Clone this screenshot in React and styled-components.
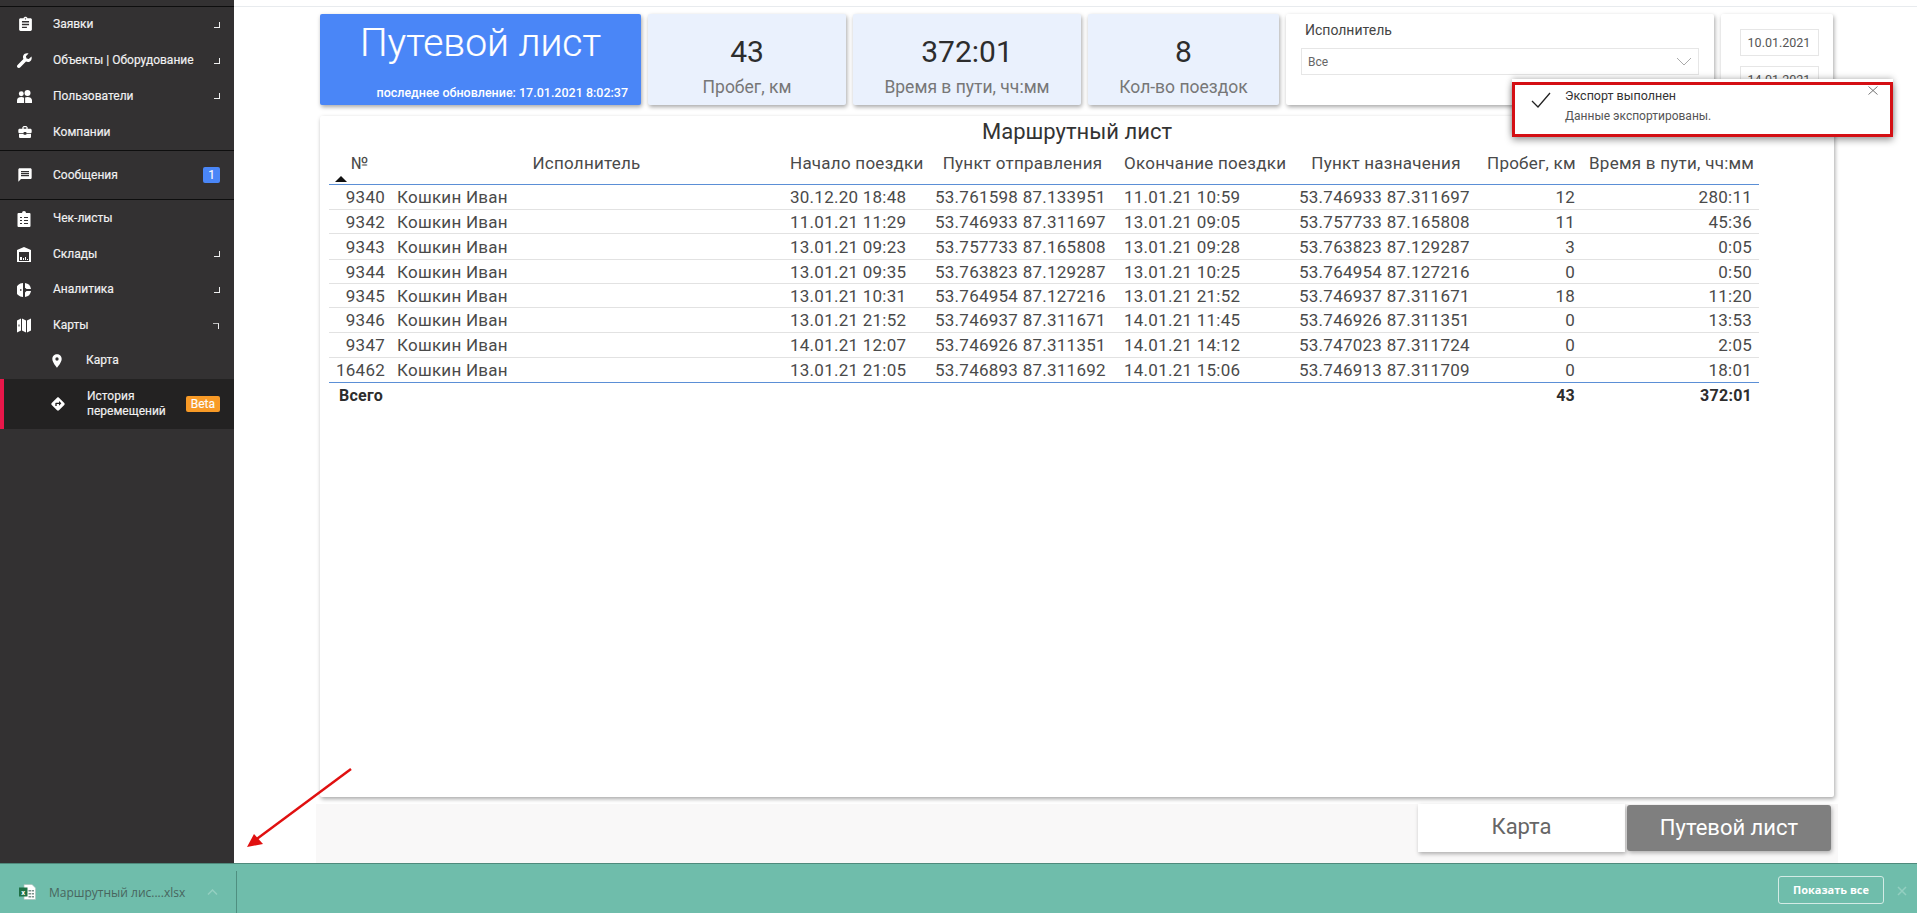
import React from 'react';
import styled, { createGlobalStyle } from 'styled-components';
import { MdAssignment, MdBusinessCenter, MdMessage, MdPlace, MdDirections } from 'react-icons/md';

const GlobalStyle = createGlobalStyle`
    html, body {
        margin: 0;
        padding: 0;
        background: #fff;
        font-family: Roboto, "Liberation Sans", sans-serif;
    }
    * { box-sizing: border-box; }
`;

const Page = styled.div`
    position: relative;
    width: 1917px;
    height: 913px;
    overflow: hidden;
    display: flex;
    flex-direction: column;
`;

const Body = styled.div`
    flex: 1;
    min-height: 0;
    display: flex;
`;

/* sidebar */
const Sidebar = styled.nav`
    width: 234px;
    flex-shrink: 0;
    background: #333132;
    padding-top: 6px;
`;

const Divider = styled.div`
    height: 1px;
    background: #0e0e0e;
    margin-bottom: ${(props) => props.$after || 0}px;
`;

const Item = styled.div`
    position: relative;
    display: flex;
    align-items: center;
    height: ${(props) => (props.$active ? 50 : props.$h || 35.5)}px;
    padding-left: ${(props) => (props.$sub ? 50 : 18)}px;
    padding-right: 14px;
    background: ${(props) => (props.$active ? '#232222' : 'transparent')};
    border-left: ${(props) => (props.$active ? '4px solid #e8174a' : '0')};
    color: #f2f2f2;
    font-size: 12px;
    line-height: 15px;
    -webkit-text-stroke: 0.15px #f2f2f2;
    ${(props) => props.$active && 'padding-left: 47px;'}
`;

const ItemIcon = styled.span`
    width: ${(props) => (props.$sub ? 36 : 35)}px;
    flex-shrink: 0;
    display: flex;
    align-items: center;
    svg { display: block; margin-left: -1px; }
`;

const ItemLabel = styled.span`
    flex: 1;
`;

const Corner = styled.span`
    width: 6px;
    height: 6px;
    border-right: 1.5px solid #eee;
    ${(props) =>
        props.$open
            ? 'border-top: 1.5px solid #bbb; margin-top: 2px; margin-right: 1px;'
            : 'border-bottom: 1.5px solid #eee;'}
`;

const Badge = styled.span`
    height: 16px;
    min-width: 17px;
    padding: 0 5px;
    border-radius: 2px;
    background: ${(props) => props.$bg};
    color: #fff;
    font-size: 12px;
    line-height: 16px;
    text-align: center;
`;

/* main area */
const Main = styled.main`
    flex: 1;
    min-width: 0;
    background: #fff;
`;

const TopLine = styled.div`
    height: 7px;
    border-bottom: 1px solid #e8ebee;
`;

const Content = styled.div`
    width: 1522px;
    height: 856px;
    margin-left: 82px;
    padding: 7px 4px 0;
    background: linear-gradient(#fff 0, #fff 797px, #f9f8f8 797px);
`;

const CardsRow = styled.div`
    display: flex;
    gap: 7px;
    height: 91px;
`;

const Card = styled.div`
    width: ${(props) => props.$w}px;
    border-radius: 2px;
    background: ${(props) => props.$bg || '#fff'};
    box-shadow: 1px 2px 4px rgba(0, 0, 0, 0.35);
`;

const TitleCard = styled(Card)`
    position: relative;
    color: #fff;
    text-align: center;
`;

const PageTitle = styled.div`
    padding-top: 5px;
    font-size: 39px;
    line-height: 48px;
    font-weight: 300;
    -webkit-text-stroke: 0.2px #fff;
`;

const Updated = styled.div`
    position: absolute;
    right: 13px;
    bottom: 5px;
    font-size: 12.5px;
    font-weight: 500;
    line-height: 14px;
    white-space: nowrap;
`;

const StatCard = styled(Card)`
    display: flex;
    flex-direction: column;
    align-items: center;
    padding-top: 20px;
`;

const StatValue = styled.div`
    font-size: 30px;
    line-height: 36px;
    color: #2d2d2d;
`;

const StatLabel = styled.div`
    margin-top: 7px;
    font-size: 17.5px;
    line-height: 20px;
    color: #777;
`;

const FilterCard = styled(Card)`
    padding: 9px 15px 0;
`;

const FilterLabel = styled.div`
    padding-left: 4px;
    font-size: 14px;
    line-height: 15px;
    color: #444;
`;

const Select = styled.div`
    display: flex;
    align-items: center;
    justify-content: space-between;
    height: 27px;
    margin-top: 10px;
    padding: 0 6px;
    border: 1px solid #e6e6e6;
    font-size: 12px;
    color: #666;
`;

const DateCard = styled(Card)`
    display: flex;
    flex-direction: column;
    align-items: center;
    gap: 10px;
    padding: 15px 0 0 4px;
    overflow: hidden;
`;

const DateBox = styled.div`
    width: 79px;
    height: 27px;
    flex-shrink: 0;
    border: 1px solid #e6e6e6;
    font-size: 12.5px;
    line-height: 25px;
    text-align: center;
    color: #555;
`;

const Panel = styled(Card)`
    width: auto;
    height: 681px;
    margin-top: 11px;
    padding: 4px 9px 0;
`;

const PanelTitle = styled.div`
    height: 30px;
    font-size: 22px;
    line-height: 24px;
    text-align: center;
    color: #333;
`;

const Table = styled.table`
    width: 1430px;
    table-layout: fixed;
    border-collapse: collapse;
    font-size: 17px;
    letter-spacing: 0.25px;
    color: #4a4a4a;
`;

const Th = styled.th`
    position: relative;
    height: 34px;
    padding: 0 7px 8px;
    border-bottom: 1.5px solid #5b8fd6;
    font-weight: 400;
    text-align: ${(props) => props.$align || 'center'};
    white-space: nowrap;
`;

const SortMark = styled.span`
    position: absolute;
    left: 6px;
    top: 26px;
    width: 0;
    height: 0;
    border-left: 6px solid transparent;
    border-right: 6px solid transparent;
    border-bottom: 6px solid #111;
`;

const Tr = styled.tr`
    height: ${(props) => props.$h}px;
`;

const Td = styled.td`
    padding: 1px ${(props) => props.$pr || 7}px 0 7px;
    border-bottom: ${(props) => (props.$last ? '1.5px solid #5b8fd6' : '1px solid #e2e2e2')};
    text-align: ${(props) => props.$align || 'left'};
    white-space: nowrap;
`;

const TotalCell = styled.td`
    height: 27px;
    padding: 0 7px 0 ${(props) => (props.$align ? 7 : 10)}px;
    font-size: 16px;
    font-weight: 700;
    color: #2d2d2d;
    text-align: ${(props) => props.$align || 'left'};
`;

const Switcher = styled.div`
    display: flex;
    justify-content: flex-end;
    align-items: center;
    gap: 2px;
    padding: 7px 3px 0 0;
`;

const SwitchButton = styled.div`
    width: ${(props) => props.$w}px;
    height: ${(props) => (props.$active ? 46 : 48)}px;
    border-radius: ${(props) => (props.$active ? 3 : 0)}px;
    background: ${(props) => (props.$active ? '#7f7f7f' : '#fff')};
    box-shadow: 1px 2px 4px rgba(0, 0, 0, 0.3);
    color: ${(props) => (props.$active ? '#fff' : '#666')};
    font-size: 22px;
    line-height: 46px;
    text-align: center;
`;

/* export toast over the filters */
const Toast = styled.div`
    position: absolute;
    left: 1512px;
    top: 82px;
    width: 381px;
    height: 55px;
    background: #fff;
    border: 3px solid #d40f14;
    box-shadow: 0 -3px 0 #fff, 0 -4px 6px rgba(0, 0, 0, 0.25), 0 3px 7px rgba(0, 0, 0, 0.4);
`;

const ToastCheck = styled.svg`
    position: absolute;
    left: 16px;
    top: 7px;
`;

const ToastClose = styled.svg`
    position: absolute;
    right: 12px;
    top: 1px;
`;

const ToastTitle = styled.div`
    position: absolute;
    left: 50px;
    top: 4px;
    font-size: 12.5px;
    line-height: 14px;
    color: #333;
`;

const ToastText = styled.div`
    position: absolute;
    left: 50px;
    top: 24px;
    font-size: 12px;
    line-height: 14px;
    color: #555;
`;

const Arrow = styled.svg`
    position: absolute;
    left: 240px;
    top: 760px;
`;

/* browser download bar */
const DownloadBar = styled.footer`
    height: 50px;
    flex-shrink: 0;
    display: flex;
    align-items: stretch;
    background: #6fbdab;
    border-top: 1px solid #4f8a7c;
    font-family: "Open Sans", "Noto Sans", sans-serif;
`;

const DownloadItem = styled.div`
    width: 237px;
    display: flex;
    align-items: center;
    margin-top: 7px;
    padding-left: 19px;
    border-right: 1px solid #4f8f80;
`;

const FileName = styled.span`
    margin-left: 13px;
    width: 158px;
    font-size: 12px;
    color: #48655e;
    white-space: nowrap;
`;

const BarActions = styled.div`
    margin-left: auto;
    display: flex;
    align-items: center;
    padding: 2px 10px 0 0;
    gap: 13px;
`;

const ShowAll = styled.div`
    width: 106px;
    height: 28px;
    border: 1px solid #d3ebe5;
    border-radius: 3px;
    color: #fff;
    font-size: 11px;
    font-weight: 700;
    line-height: 26px;
    text-align: center;
`;

const CloseBar = styled.svg`
    margin-top: 2px;
`;

function WrenchIcon() {
    return (
        <svg width="15" height="15" viewBox="0 0 14 14">
            <path
                fill="#fff"
                d="M13.500 3.200L11 5.700 8.900 5.100 8.300 3 10.800.5C8.800-.1 6.700.5 5.900 2.300c-.5 1.100-.4 2.300.1 3.300L.5 11.100c-.7.7-.7 1.700 0 2.400s1.700.7 2.400 0l5.500-5.500c1 .5 2.200.6 3.300.1 1.800-.8 2.400-2.900 1.800-4.800Z"
            />
        </svg>
    );
}

function PeopleIcon() {
    return (
        <svg width="15" height="13" viewBox="0 0 14 12">
            <circle cx="4" cy="3.500" r="2.300" fill="#fff" />
            <circle cx="9.800" cy="2.800" r="2.800" fill="#fff" />
            <path fill="#fff" d="M0 12V9.500C0 7.500 2 6.500 4 6.500c1 0 2 .3 2.600.7V12Z" />
            <path fill="#fff" d="M7.600 12V7c.6-.4 1.400-.6 2.200-.6 2.200 0 4.200 1 4.200 3.200V12Z" />
        </svg>
    );
}

function ChecklistIcon() {
    return (
        <svg width="14" height="16" viewBox="0 0 14 16">
            <path
                fill="#fff"
                fillRule="evenodd"
                d="M1.500 2H5a2 2 0 0 1 4 0h3.500A1 1 0 0 1 13.500 3v12a1 1 0 0 1-1 1h-11a1 1 0 0 1-1-1V3a1 1 0 0 1 1-1ZM3 6v1h2V6Zm0 3v1h2V9Zm0 3v1h2v-1Zm4-6v1h4V6ZM7 9v1h4V9Zm0 3v1h4v-1Z"
            />
        </svg>
    );
}

function WarehouseIcon() {
    return (
        <svg width="14" height="15" viewBox="0 0 14 15">
            <path
                fill="#fff"
                fillRule="evenodd"
                d="M7 0l7 3v12H0V3Zm-5 5v9h10V5ZM3 10h2v3H3Zm3 1h1v2H6Zm2-1h1v3H8Zm2 2h1v1h-1Z"
            />
        </svg>
    );
}

function PieIcon() {
    return (
        <svg width="14" height="14" viewBox="0 0 14 14">
            <path fill="#fff" fillRule="evenodd" d="M6 0v14A7 7 0 0 1 6 0ZM3 6.300v1.400h1.500V6.300Z" />
            <path fill="#fff" d="M8 0a7 7 0 0 1 6 6H9.500L8 4.500Z" />
            <path fill="#fff" d="M8 14a7 7 0 0 0 6-6H9.500L8 9.500Z" />
        </svg>
    );
}

function MapIcon() {
    return (
        <svg width="14" height="15" viewBox="0 0 14 15">
            <path fill="#fff" fillRule="evenodd" d="M0 2.500L4 .5v12l-4 2ZM1.500 6.500v2h1v-2Z" />
            <path fill="#fff" d="M5 .5l4 2v12l-4-2Z" />
            <path fill="#fff" d="M10 2.500l4-2v12l-4 2Z" />
        </svg>
    );
}

function ExcelIcon() {
    return (
        <svg width="17" height="16" viewBox="0 0 17 16">
            <path fill="#fff" stroke="#a5bdb8" strokeWidth="0.7" d="M5 .4h8l3.600 3.600v11.600H5Z" />
            <path fill="#7b918c" d="M9.500 6h2.500v1.500H9.500Zm3.200 0h2.300v1.500h-2.300ZM9.500 9h2.500v1.500H9.500Zm3.200 0h2.300v1.500h-2.300Zm-3.200 3h2.500v1.500H9.500Zm3.200 0h2.300v1.500h-2.300Z" />
            <rect x="0" y="3.500" width="8.500" height="9" fill="#1e7145" />
            <text x="4.200" y="10.700" fontSize="7.500" fontWeight="700" fill="#fff" textAnchor="middle" fontFamily="Roboto">x</text>
        </svg>
    );
}

const rows = [
    [25, '9340', '30.12.20 18:48', '53.761598 87.133951', '11.01.21 10:59', '53.746933 87.311697', '12', '280:11'],
    [24, '9342', '11.01.21 11:29', '53.746933 87.311697', '13.01.21 09:05', '53.757733 87.165808', '11', '45:36'],
    [26, '9343', '13.01.21 09:23', '53.757733 87.165808', '13.01.21 09:28', '53.763823 87.129287', '3', '0:05'],
    [24, '9344', '13.01.21 09:35', '53.763823 87.129287', '13.01.21 10:25', '53.764954 87.127216', '0', '0:50'],
    [24, '9345', '13.01.21 10:31', '53.764954 87.127216', '13.01.21 21:52', '53.746937 87.311671', '18', '11:20'],
    [25, '9346', '13.01.21 21:52', '53.746937 87.311671', '14.01.21 11:45', '53.746926 87.311351', '0', '13:53'],
    [25, '9347', '14.01.21 12:07', '53.746926 87.311351', '14.01.21 14:12', '53.747023 87.311724', '0', '2:05'],
    [25, '16462', '13.01.21 21:05', '53.746893 87.311692', '14.01.21 15:06', '53.746913 87.311709', '0', '18:01'],
];

const columns = [61, 393, 145, 189, 175, 188, 102, 177];

function MenuItem({ icon, label, corner, open, h }) {
    return (
        <Item $h={h}>
            <ItemIcon>{icon}</ItemIcon>
            <ItemLabel>{label}</ItemLabel>
            {corner && <Corner $open={open} />}
        </Item>
    );
}

export default function App() {
    return (
        <Page>
            <GlobalStyle />
            <Body>
                <Sidebar>
                    <Divider />
                    <MenuItem h={35.75} icon={<MdAssignment size={17} color="#fff" />} label="Заявки" corner />
                    <MenuItem h={35.75} icon={<WrenchIcon />} label="Объекты | Оборудование" corner />
                    <MenuItem h={35.75} icon={<PeopleIcon />} label="Пользователи" corner />
                    <MenuItem h={35.75} icon={<MdBusinessCenter size={16} color="#fff" />} label="Компании" />
                    <Divider />
                    <Item $h={48}>
                        <ItemIcon><MdMessage size={16} color="#fff" /></ItemIcon>
                        <ItemLabel>Сообщения</ItemLabel>
                        <Badge $bg="#4a86f7">1</Badge>
                    </Item>
                    <Divider $after={1} />
                    <MenuItem icon={<ChecklistIcon />} label="Чек-листы" />
                    <MenuItem icon={<WarehouseIcon />} label="Склады" corner />
                    <MenuItem icon={<PieIcon />} label="Аналитика" corner />
                    <MenuItem icon={<MapIcon />} label="Карты" corner open />
                    <Item $sub>
                        <ItemIcon $sub><MdPlace size={16} color="#fff" /></ItemIcon>
                        <ItemLabel>Карта</ItemLabel>
                    </Item>
                    <Item $sub $active>
                        <ItemIcon $sub><MdDirections size={16} color="#fff" /></ItemIcon>
                        <ItemLabel>История<br />перемещений</ItemLabel>
                        <Badge $bg="#f89a26">Beta</Badge>
                    </Item>
                </Sidebar>
                <Main>
                    <TopLine />
                    <Content>
                        <CardsRow>
                            <TitleCard $w={321} $bg="#4a86f7">
                                <PageTitle>Путевой лист</PageTitle>
                                <Updated>последнее обновление: 17.01.2021 8:02:37</Updated>
                            </TitleCard>
                            <StatCard $w={198} $bg="#eaf1fd">
                                <StatValue>43</StatValue>
                                <StatLabel>Пробег, км</StatLabel>
                            </StatCard>
                            <StatCard $w={228} $bg="#eaf1fd">
                                <StatValue>372:01</StatValue>
                                <StatLabel>Время в пути, чч:мм</StatLabel>
                            </StatCard>
                            <StatCard $w={191} $bg="#eaf1fd">
                                <StatValue>8</StatValue>
                                <StatLabel>Кол-во поездок</StatLabel>
                            </StatCard>
                            <FilterCard $w={428}>
                                <FilterLabel>Исполнитель</FilterLabel>
                                <Select>
                                    Все
                                    <svg width="16" height="9" viewBox="0 0 16 9">
                                        <path d="M1 1l7 7 7-7" fill="none" stroke="#aaa" strokeWidth="1" />
                                    </svg>
                                </Select>
                            </FilterCard>
                            <DateCard $w={112}>
                                <DateBox>10.01.2021</DateBox>
                                <DateBox>14.01.2021</DateBox>
                            </DateCard>
                        </CardsRow>
                        <Panel>
                            <PanelTitle>Маршрутный лист</PanelTitle>
                            <Table>
                                <colgroup>
                                    {columns.map((w, i) => (
                                        <col key={i} width={w} />
                                    ))}
                                </colgroup>
                                <thead>
                                    <tr>
                                        <Th>№<SortMark /></Th>
                                        <Th>Исполнитель</Th>
                                        <Th>Начало поездки</Th>
                                        <Th>Пункт отправления</Th>
                                        <Th>Окончание поездки</Th>
                                        <Th>Пункт назначения</Th>
                                        <Th $align="right">Пробег, км</Th>
                                        <Th $align="right">Время в пути, чч:мм</Th>
                                    </tr>
                                </thead>
                                <tbody>
                                    {rows.map((r, i) => {
                                        const last = i === rows.length - 1;
                                        return (
                                            <Tr key={r[1]} $h={r[0]}>
                                                <Td $last={last} $align="right" $pr={5}>{r[1]}</Td>
                                                <Td $last={last}>Кошкин Иван</Td>
                                                <Td $last={last}>{r[2]}</Td>
                                                <Td $last={last}>{r[3]}</Td>
                                                <Td $last={last}>{r[4]}</Td>
                                                <Td $last={last}>{r[5]}</Td>
                                                <Td $last={last} $align="right">{r[6]}</Td>
                                                <Td $last={last} $align="right">{r[7]}</Td>
                                            </Tr>
                                        );
                                    })}
                                    <tr>
                                        <TotalCell colSpan={6}>Всего</TotalCell>
                                        <TotalCell $align="right">43</TotalCell>
                                        <TotalCell $align="right">372:01</TotalCell>
                                    </tr>
                                </tbody>
                            </Table>
                        </Panel>
                        <Switcher>
                            <SwitchButton $w={207}>Карта</SwitchButton>
                            <SwitchButton $w={204} $active>Путевой лист</SwitchButton>
                        </Switcher>
                    </Content>
                </Main>
            </Body>
            <DownloadBar>
                <DownloadItem>
                    <ExcelIcon />
                    <FileName>Маршрутный лис....xlsx</FileName>
                    <svg width="11" height="6" viewBox="0 0 11 6">
                        <path d="M1 5.500l4.500-4.500 4.500 4.500" fill="none" stroke="#93cfc0" strokeWidth="1.500" />
                    </svg>
                </DownloadItem>
                <BarActions>
                    <ShowAll>Показать все</ShowAll>
                    <CloseBar width="10" height="10" viewBox="0 0 10 10">
                        <path d="M1 1l8 8M9 1l-8 8" stroke="#93cfc0" strokeWidth="1.500" />
                    </CloseBar>
                </BarActions>
            </DownloadBar>
            <Toast>
                <ToastCheck width="20" height="16" viewBox="0 0 20 16">
                    <path d="M1 9l6 6L19 1" fill="none" stroke="#222" strokeWidth="1.300" />
                </ToastCheck>
                <ToastTitle>Экспорт выполнен</ToastTitle>
                <ToastText>Данные экспортированы.</ToastText>
                <ToastClose width="10" height="9" viewBox="0 0 10 9">
                    <path d="M.5.500l9 8M9.500.500l-9 8" stroke="#666" strokeWidth="0.900" />
                </ToastClose>
            </Toast>
            <Arrow width="120" height="95" viewBox="0 0 120 95">
                <path d="M111 9L14 81" stroke="#e01010" strokeWidth="2.500" />
                <path d="M7 87l7-13 9 10Z" fill="#e01010" />
            </Arrow>
        </Page>
    );
}
